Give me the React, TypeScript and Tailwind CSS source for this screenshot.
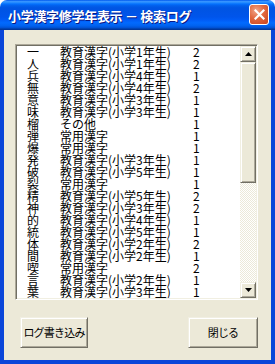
import React from 'react'

const rows: [string, string, string][] = [
  ['一', '教育漢字(小学1年生)', '2'],
  ['人', '教育漢字(小学1年生)', '2'],
  ['兵', '教育漢字(小学4年生)', '1'],
  ['無', '教育漢字(小学4年生)', '2'],
  ['意', '教育漢字(小学3年生)', '1'],
  ['味', '教育漢字(小学3年生)', '1'],
  ['榴', 'その他', '1'],
  ['弾', '常用漢字', '1'],
  ['爆', '常用漢字', '1'],
  ['発', '教育漢字(小学3年生)', '1'],
  ['破', '教育漢字(小学5年生)', '1'],
  ['裂', '常用漢字', '1'],
  ['精', '教育漢字(小学5年生)', '2'],
  ['神', '教育漢字(小学3年生)', '2'],
  ['的', '教育漢字(小学4年生)', '1'],
  ['統', '教育漢字(小学5年生)', '1'],
  ['体', '教育漢字(小学2年生)', '2'],
  ['間', '教育漢字(小学2年生)', '1'],
  ['喫', '常用漢字', '2'],
  ['言', '教育漢字(小学2年生)', '1'],
  ['葉', '教育漢字(小学3年生)', '1'],
]

// classic raised 3D face used by scroll buttons, thumb and command buttons
const raised =
  'bg-[#ece9d8] border border-t-[#f1efe2] border-l-[#f1efe2] border-r-[#716f64] border-b-[#716f64] shadow-[inset_1px_1px_0_#ffffff,inset_-1px_-1px_0_#aca899]'

function ScrollButton({ down }: { down?: boolean }) {
  return (
    <div className={`h-[16px] flex items-center justify-center ${raised}`}>
      <svg width="7" height="4" viewBox="0 0 7 4">
        {down ? <path d="M0 0h7L3.5 4z" fill="#000" /> : <path d="M3.5 0L7 4H0z" fill="#000" />}
      </svg>
    </div>
  )
}

function Button({ label, className }: { label: string; className?: string }) {
  return (
    <div
      className={`h-[31px] flex items-center justify-center whitespace-nowrap text-[11px] tracking-[-0.8px] text-black ${raised} ${className ?? ''}`}
    >
      {label}
    </div>
  )
}

export default function App() {
  return (
    <div className="w-[275px] h-[364px] flex flex-col bg-white font-['Noto_Sans_CJK_JP',sans-serif] select-none">
      {/* Title bar */}
      <div className="h-[30px] shrink-0 rounded-t-[7px] flex items-center pl-[8px] pr-[6px] bg-[linear-gradient(to_bottom,#0058ee_0%,#3593ff_5%,#288eff_8%,#127dff_11%,#036ffc_14%,#0262ee_18%,#0057e5_24%,#0054e3_30%,#0055eb_56%,#005bf5_66%,#026afe_76%,#0062ef_86%,#0052d6_92%,#0040ab_96%,#003092_100%)]">
        <span className="flex-1 whitespace-nowrap text-white font-bold text-[13px] leading-none tracking-[-0.3px] [text-shadow:1px_1px_#0a1883]">
          小学漢字修学年表示 － 検索ログ
        </span>
        <div className="w-[20px] h-[21px] mb-[1px] rounded-[3px] border border-white flex items-center justify-center bg-[radial-gradient(circle_at_35%_30%,#f0a58a_0%,#e2683f_45%,#c8431d_100%)]">
          <svg width="11" height="11" viewBox="0 0 11 11">
            <path d="M1.5 1.5l8 8M9.5 1.5l-8 8" stroke="#fff" strokeWidth="2.2" strokeLinecap="square" />
          </svg>
        </div>
      </div>

      {/* Client area inside the blue frame */}
      <div className="flex-1 flex flex-col border-x-4 border-b-4 border-[#0a46d9] bg-[#ece9d8] pt-[14px] pl-[11px] pr-[13px] pb-[12px]">
        {/* List box */}
        <div className="h-[256px] flex border border-t-[#aca899] border-l-[#aca899] border-r-white border-b-white shadow-[inset_1px_1px_0_#716f64,inset_-1px_-1px_0_#f1efe2] p-[1px]">
          <div className="flex-1 bg-white pl-[10px] overflow-hidden">
            {rows.map(([k, cat, n], i) => (
              <div key={i} className="h-[12px] flex text-[12px] leading-[12px] text-black whitespace-nowrap">
                <span className="w-[33px] shrink-0">{k}</span>
                <span className="w-[133px] shrink-0">{cat}</span>
                <span>{n}</span>
              </div>
            ))}
          </div>
          {/* Scrollbar */}
          <div className="w-[16px] flex flex-col">
            <ScrollButton />
            <div className="flex-1 flex flex-col bg-[repeating-conic-gradient(#ffffff_0_25%,#ece9d8_0_50%)] bg-[length:2px_2px]">
              <div className={`h-[121px] ${raised}`} />
            </div>
            <ScrollButton down />
          </div>
        </div>

        {/* Buttons */}
        <div className="mt-[17px] flex justify-between pl-[5px]">
          <Button label="ログ書き込み" className="w-[68px]" />
          <Button label="閉じる" className="w-[70px]" />
        </div>
      </div>
    </div>
  )
}
